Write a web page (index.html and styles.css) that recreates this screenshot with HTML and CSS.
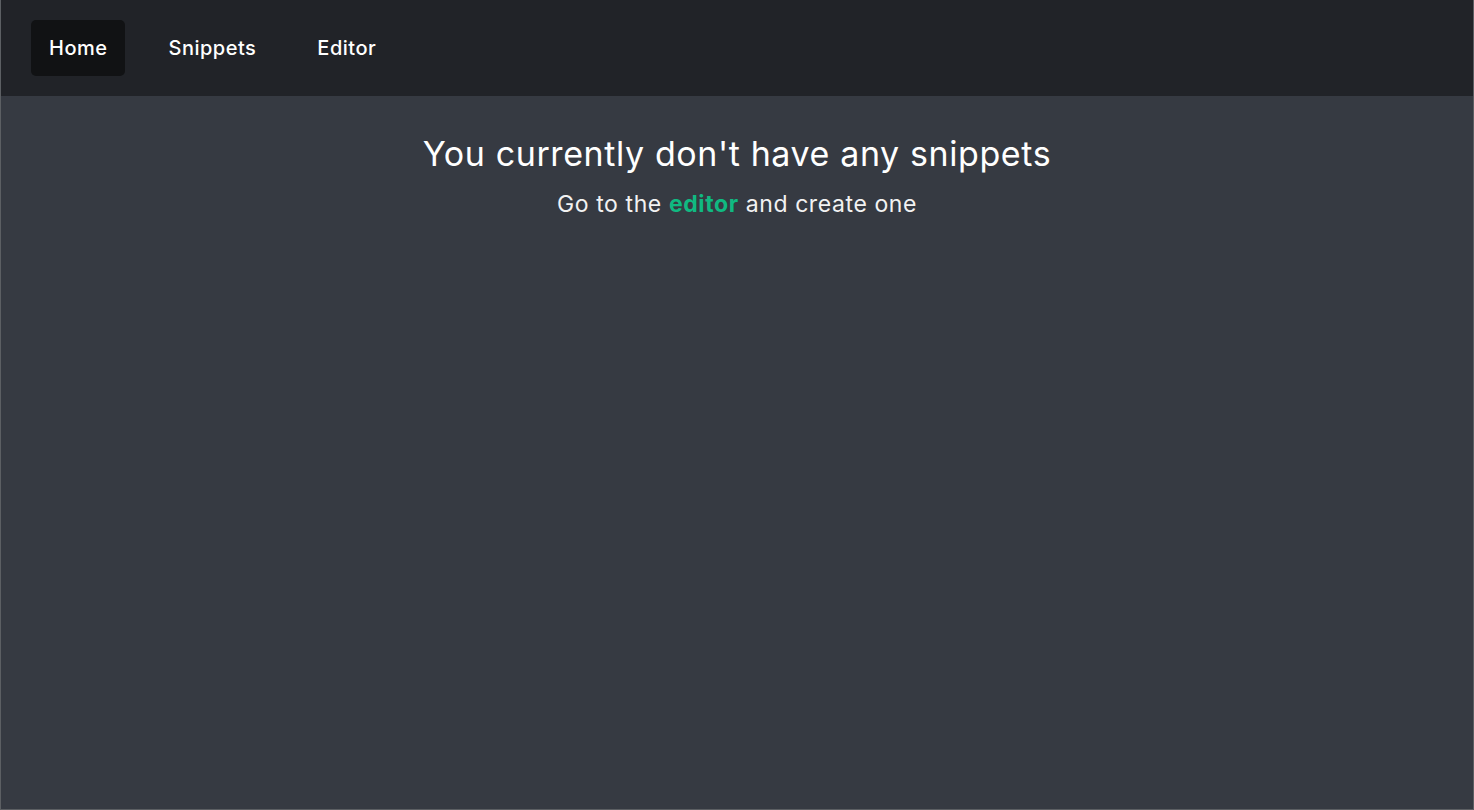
FILE: index.html
```html
<!DOCTYPE html>
<html lang="en">
<head>
<meta charset="utf-8">
<title>Snippets</title>
<link rel="stylesheet" href="styles.css">
</head>
<body>
<div class="frame">
  <nav class="navbar">
    <a class="nav-link active" href="#">Home</a>
    <a class="nav-link" href="#">Snippets</a>
    <a class="nav-link" href="#">Editor</a>
  </nav>
  <main class="content">
    <h1 class="title">You currently don't have any snippets</h1>
    <p class="subtitle">Go to the <a class="accent" href="#">editor</a> and create one</p>
  </main>
</div>
</body>
</html>
```
FILE: styles.css
```css
html, body {
  margin: 0;
  height: 100%;
}
body {
  font-family: Inter, "Noto Sans", sans-serif;
  background: #363a42;
  color: #ffffff;
}
.frame {
  box-sizing: border-box;
  height: 100%;
  display: flex;
  flex-direction: column;
  border: 1px solid #5c5f63;
  border-top: none;
}
.navbar {
  height: 96px;
  background: #212328;
  display: flex;
  align-items: center;
  padding: 0 30px;
  gap: 25px;
  flex-shrink: 0;
}
.nav-link {
  color: #ffffff;
  text-decoration: none;
  font-size: 20px;
  font-weight: 500;
  letter-spacing: 0.5px;
  padding: 0 18px;
  height: 56px;
  display: flex;
  align-items: center;
  border-radius: 5px;
}
.nav-link.active {
  background: #111214;
}
.content {
  flex: 1;
  background: #363a42;
  text-align: center;
  padding-top: 34px;
}
.title {
  margin: 0;
  font-size: 34px;
  font-weight: 400;
  letter-spacing: 0.6px;
  line-height: 48px;
}
.subtitle {
  margin: 10px 0 0;
  font-size: 23px;
  letter-spacing: 0.6px;
  line-height: 32px;
  color: #f2f2f2;
}
.accent {
  color: #10b981;
  font-weight: 700;
  text-decoration: none;
}
```
